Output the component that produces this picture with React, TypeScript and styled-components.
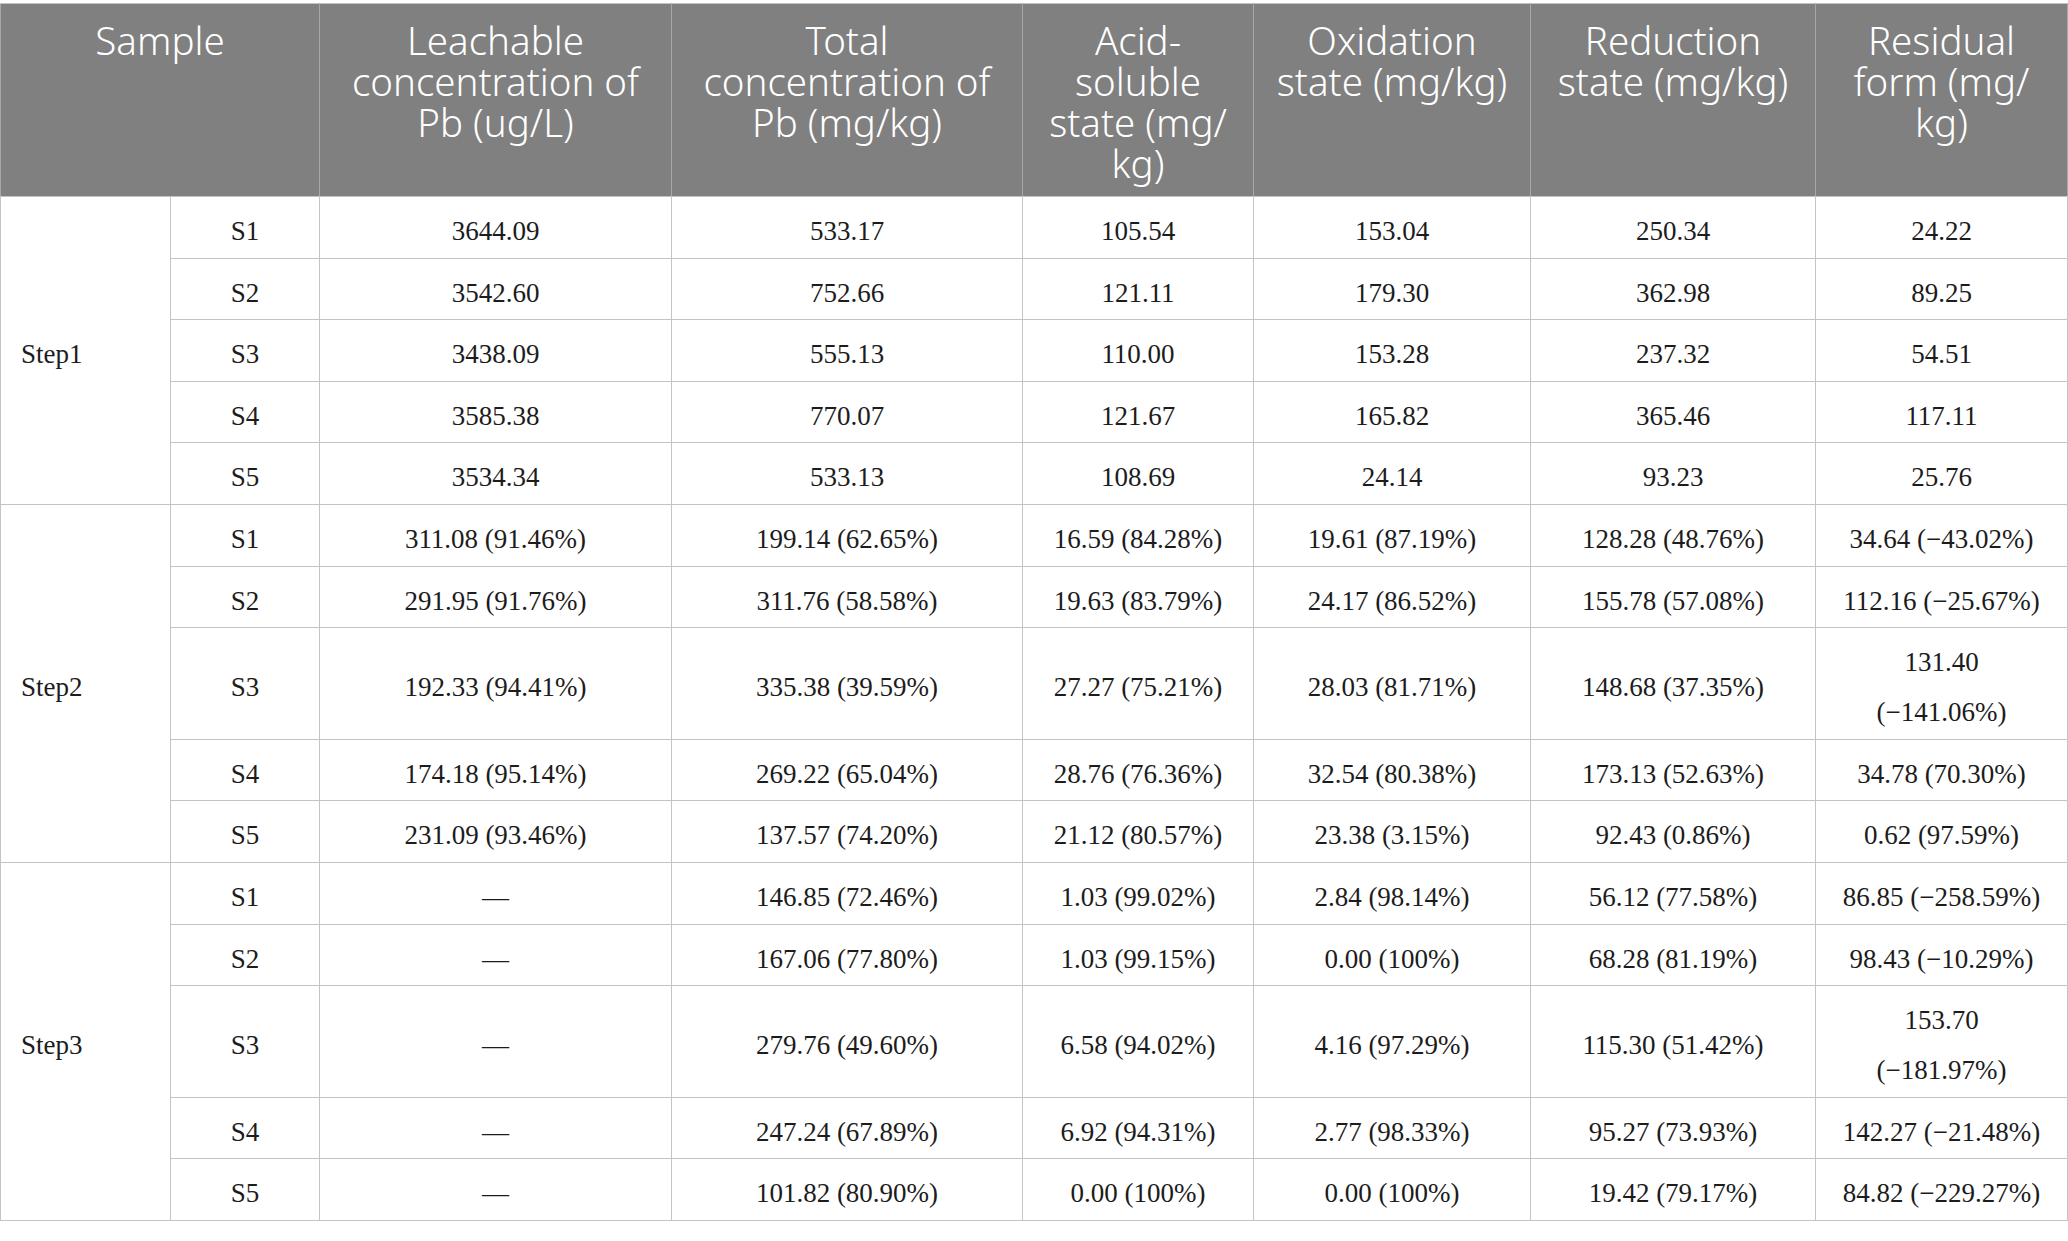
import styled, { createGlobalStyle } from 'styled-components';

const GlobalStyle = createGlobalStyle`
  html, body {
    margin: 0;
    padding: 0;
    background: #ffffff;
  }
  body {
    padding-top: 3px;
  }
`;

type Group = {
  step: string;
  rows: string[][];
};

const headers = [
  ['Leachable', 'concentration of', 'Pb (ug/L)'],
  ['Total', 'concentration of', 'Pb (mg/kg)'],
  ['Acid-', 'soluble', 'state (mg/', 'kg)'],
  ['Oxidation', 'state (mg/kg)'],
  ['Reduction', 'state (mg/kg)'],
  ['Residual', 'form (mg/', 'kg)'],
];

const colWidths = [170, 149, 352, 351, 231, 277, 285, 252];

const groups: Group[] = [
  {
    step: 'Step1',
    rows: [
      ['S1', '3644.09', '533.17', '105.54', '153.04', '250.34', '24.22'],
      ['S2', '3542.60', '752.66', '121.11', '179.30', '362.98', '89.25'],
      ['S3', '3438.09', '555.13', '110.00', '153.28', '237.32', '54.51'],
      ['S4', '3585.38', '770.07', '121.67', '165.82', '365.46', '117.11'],
      ['S5', '3534.34', '533.13', '108.69', '24.14', '93.23', '25.76'],
    ],
  },
  {
    step: 'Step2',
    rows: [
      ['S1', '311.08 (91.46%)', '199.14 (62.65%)', '16.59 (84.28%)', '19.61 (87.19%)', '128.28 (48.76%)', '34.64 (\u221243.02%)'],
      ['S2', '291.95 (91.76%)', '311.76 (58.58%)', '19.63 (83.79%)', '24.17 (86.52%)', '155.78 (57.08%)', '112.16 (\u221225.67%)'],
      ['S3', '192.33 (94.41%)', '335.38 (39.59%)', '27.27 (75.21%)', '28.03 (81.71%)', '148.68 (37.35%)', '131.40\n(\u2212141.06%)'],
      ['S4', '174.18 (95.14%)', '269.22 (65.04%)', '28.76 (76.36%)', '32.54 (80.38%)', '173.13 (52.63%)', '34.78 (70.30%)'],
      ['S5', '231.09 (93.46%)', '137.57 (74.20%)', '21.12 (80.57%)', '23.38 (3.15%)', '92.43 (0.86%)', '0.62 (97.59%)'],
    ],
  },
  {
    step: 'Step3',
    rows: [
      ['S1', '\u2014', '146.85 (72.46%)', '1.03 (99.02%)', '2.84 (98.14%)', '56.12 (77.58%)', '86.85 (\u2212258.59%)'],
      ['S2', '\u2014', '167.06 (77.80%)', '1.03 (99.15%)', '0.00 (100%)', '68.28 (81.19%)', '98.43 (\u221210.29%)'],
      ['S3', '\u2014', '279.76 (49.60%)', '6.58 (94.02%)', '4.16 (97.29%)', '115.30 (51.42%)', '153.70\n(\u2212181.97%)'],
      ['S4', '\u2014', '247.24 (67.89%)', '6.92 (94.31%)', '2.77 (98.33%)', '95.27 (73.93%)', '142.27 (\u221221.48%)'],
      ['S5', '\u2014', '101.82 (80.90%)', '0.00 (100%)', '0.00 (100%)', '19.42 (79.17%)', '84.82 (\u2212229.27%)'],
    ],
  },
];

const App = () => {
  return (
    <>
      <GlobalStyle />
      <DataTable>
        <colgroup>
          {colWidths.map((w, i) => (
            <col key={i} style={{ width: w }} />
          ))}
        </colgroup>
        <thead>
          <tr>
            <HeadCell colSpan={2}>Sample</HeadCell>
            {headers.map((lines, i) => (
              <HeadCell key={i}>
                {lines.map((line, j) => (
                  <HeadLine key={j}>{line}</HeadLine>
                ))}
              </HeadCell>
            ))}
          </tr>
        </thead>
        <tbody>
          {groups.map((group) =>
            group.rows.map((row, r) => (
              <tr key={group.step + r}>
                {r === 0 && <StepCell rowSpan={group.rows.length}>{group.step}</StepCell>}
                {row.map((value, c) => (
                  <Cell key={c}>{value}</Cell>
                ))}
              </tr>
            )),
          )}
        </tbody>
      </DataTable>
    </>
  );
};

const DataTable = styled.table`
  width: 2067px;
  table-layout: fixed;
  border-collapse: collapse;
  border: 1px solid #c4c4c4;
`;

const HeadCell = styled.th`
  background: #7f807f;
  color: #ffffff;
  font-family: 'Noto Sans', 'Open Sans', sans-serif;
  font-weight: 300;
  font-size: 38.5px;
  line-height: 41px;
  text-align: center;
  vertical-align: top;
  padding: 16px 6px 12px;
  border: 1px solid #a8a8a8;
  border-top-color: #c4c4c4;
  border-bottom-color: #c4c4c4;
`;

const HeadLine = styled.span`
  display: block;
  white-space: nowrap;
`;

const Cell = styled.td`
  font-family: 'Liberation Serif', 'Times New Roman', serif;
  font-size: 27px;
  line-height: 50px;
  color: #1c1c1c;
  text-align: center;
  vertical-align: middle;
  white-space: pre-line;
  padding: 9px 4px 1.6px;
  border: 1px solid #c4c4c4;
`;

const StepCell = styled(Cell)`
  text-align: left;
  padding-left: 20px;
`;

export default App;
